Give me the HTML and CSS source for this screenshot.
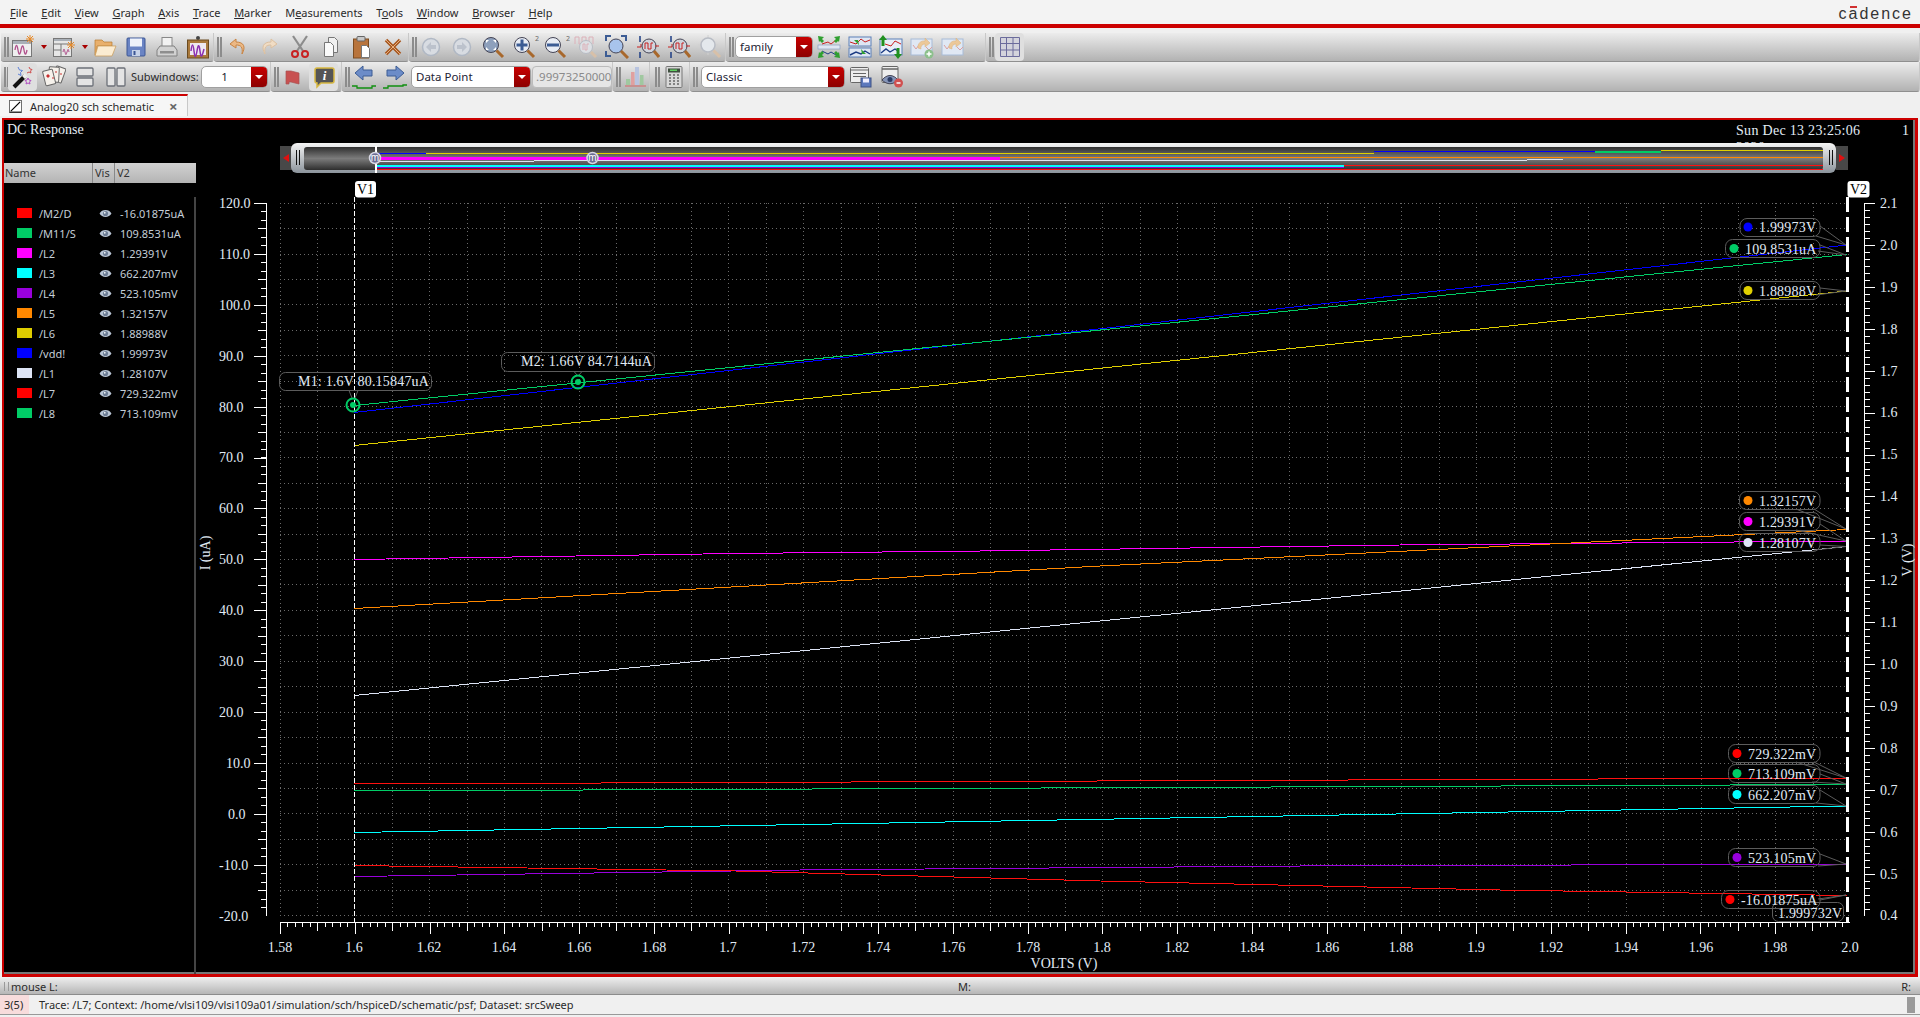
FILE: index.html
```html
<!DOCTYPE html>
<html lang="en">
<head>
<meta charset="utf-8">
<title>Virtuoso Visualization and Analysis</title>
<link rel="stylesheet" href="styles.css">
</head>
<body>
<svg class="defs" width="0" height="0">
  <defs>
    <linearGradient id="capsule" x1="0" y1="0" x2="0" y2="1"><stop offset="0" stop-color="#f4f4f4"/><stop offset="1" stop-color="#8c949c"/></linearGradient>
    <linearGradient id="inner" x1="0" y1="0" x2="0" y2="1"><stop offset="0" stop-color="#2e2e2e"/><stop offset=".5" stop-color="#7c7c7c"/><stop offset="1" stop-color="#2e2e2e"/></linearGradient>
    <symbol id="i-newwin" viewBox="0 0 24 24"><rect x="1.5" y="5.5" width="19" height="16" fill="#efefef" stroke="#777"/><rect x="2" y="6" width="18" height="3" fill="#a9b0b8"/><path d="M4 15c1-6 2-6 3 0s2 5 3 0 2-6 3 0 2 5 3 0" fill="none" stroke="#b0508c" stroke-width="1.3"/><path d="M19 0v8M15 4h8M16 1l6 6M22 1l-6 6" stroke="#e88a28"/></symbol>
    <symbol id="i-layout" viewBox="0 0 24 24"><rect x="1.5" y="3.5" width="18" height="18" fill="#e6e6e6" stroke="#777"/><path d="M1.500 9h18M9 9v12M1.500 15h7.500" stroke="#777" fill="none"/><rect x="2" y="4" width="17" height="2" fill="#a9b0b8"/><path d="M11 17c1-4 1-4 2 0s1 3 2 0 1-4 2 0" fill="none" stroke="#b0508c"/><path d="M19 6v8M15 10h8M16 7l6 6M22 7l-6 6" stroke="#e88a28"/></symbol>
    <symbol id="i-folder" viewBox="0 0 24 24"><path d="M2 5h7l2 2h8v4H4v9H2z" fill="#e9b06c" stroke="#b87c30" stroke-width=".7"/><path d="M5 11h18l-4 10H2z" fill="#fbecd2" stroke="#c89a54" stroke-width=".7"/></symbol>
    <symbol id="i-save" viewBox="0 0 24 24"><rect x="3" y="3" width="18" height="18" rx="1" fill="#6a84c4" stroke="#3c5694"/><rect x="6" y="3.500" width="12" height="8" fill="#eef2fa"/><rect x="8" y="15" width="8" height="6" fill="#c7d2e8"/><rect x="9.500" y="16" width="2" height="4" fill="#3c5694"/></symbol>
    <symbol id="i-print" viewBox="0 0 24 24"><rect x="7" y="2.500" width="10" height="9" fill="#f2f2f2" stroke="#888"/><path d="M5 11h14l3 4v6H2v-6z" fill="#d2d2d2" stroke="#808080"/><rect x="5" y="16" width="14" height="2.500" fill="#8e8e8e"/></symbol>
    <symbol id="i-frame" viewBox="0 0 24 24"><circle cx="12" cy="3" r="2" fill="#444"/><rect x="1.500" y="5" width="21" height="18" fill="#a9793c" stroke="#6a4a20"/><rect x="4" y="8" width="16" height="12" fill="#eee8f0"/><path d="M5 16c1-8 2-8 3 0s2 6 3 0 2-8 3 0 2 6 4-2" fill="none" stroke="#8c30b0" stroke-width="1.500"/></symbol>
    <symbol id="i-undo" viewBox="0 0 24 24"><path d="M10 4 4 9l6 4v-3c5 0 7 2 6 9 4-7 2-12-6-12z" fill="#ecb884" stroke="#c88444"/></symbol>
    <symbol id="i-redo" viewBox="0 0 24 24"><path d="M14 4l6 5-6 4v-3c-5 0-7 2-6 9-4-7-2-12 6-12z" fill="#f0dcc4" stroke="#dcc0a0"/></symbol>
    <symbol id="i-cut" viewBox="0 0 24 24"><path d="M5 1l10 15M19 1 9 16" stroke="#8c8c8c" stroke-width="2.200" fill="none"/><circle cx="7" cy="19" r="3" fill="none" stroke="#c82020" stroke-width="2"/><circle cx="17" cy="19" r="3" fill="none" stroke="#c82020" stroke-width="2"/></symbol>
    <symbol id="i-copy" viewBox="0 0 24 24"><path d="M9.500 2.500h6l3 3v12h-9z" fill="#f0f0f0" stroke="#777"/><path d="M5.500 7.500h6l3 3v11h-9z" fill="#fafafa" stroke="#777"/></symbol>
    <symbol id="i-paste" viewBox="0 0 24 24"><rect x="3.500" y="4" width="15" height="19" fill="#b8743c" stroke="#7c4c20"/><rect x="7" y="1.500" width="8" height="4.500" rx="1" fill="#c8c8c8" stroke="#666"/><path d="M11.500 10.500h5l3 3v9h-8z" fill="#fff" stroke="#777"/></symbol>
    <symbol id="i-x" viewBox="0 0 24 24"><path d="M5 5l14 14M19 5 5 19" stroke="#a85820" stroke-width="3.500"/><path d="M5 5l14 14M19 5 5 19" stroke="#e8b080" stroke-width="1"/></symbol>
    <symbol id="i-back" viewBox="0 0 24 24"><circle cx="12" cy="12" r="8.500" fill="#d8dce2" stroke="#b0b8c4" stroke-width="1.500"/><path d="M12 7 7 12l5 5v-3h5v-4h-5z" fill="#bcc2cc"/></symbol>
    <symbol id="i-fwd" viewBox="0 0 24 24"><circle cx="12" cy="12" r="8.500" fill="#d8dce2" stroke="#b0b8c4" stroke-width="1.500"/><path d="M12 7l5 5-5 5v-3H7v-4h5z" fill="#bcc2cc"/></symbol>
    <symbol id="i-zfit" viewBox="0 0 24 24"><circle cx="10" cy="10" r="7.500" fill="#8ea0bc" stroke="#445"/><path d="M5 5h3L5 8zM15 5h-3l3 3zM5 15h3l-3-3zM15 15h-3l3-3z" fill="#fff"/><path d="M15.500 15.500 22 22" stroke="#a8682c" stroke-width="3"/></symbol>
    <symbol id="i-zin" viewBox="0 0 24 24"><circle cx="10" cy="10" r="7.500" fill="#e8ecf4" stroke="#445"/><path d="M4.500 10h11M10 4.500v11" stroke="#3c5c94" stroke-width="3"/><path d="M15.500 15.500 22 22" stroke="#a8682c" stroke-width="3"/></symbol>
    <symbol id="i-zout" viewBox="0 0 24 24"><circle cx="10" cy="10" r="7.500" fill="#e8ecf4" stroke="#445"/><path d="M4 10h12" stroke="#3c5c94" stroke-width="3"/><path d="M15.500 15.500 22 22" stroke="#a8682c" stroke-width="3"/></symbol>
    <symbol id="i-zwave" viewBox="0 0 24 24"><path d="M1 9V2h4v7h3V2h4v7h3V2h4v7" fill="none" stroke="#dcb0b8"/><circle cx="12" cy="12" r="6.500" fill="#dde0e4" stroke="#b8bcc4"/><path d="M9 15V9h2v6h2V9h2" fill="none" stroke="#dcb0b8"/><path d="M17 17l5 5" stroke="#d8c0a8" stroke-width="3"/></symbol>
    <symbol id="i-zbox" viewBox="0 0 24 24"><path d="M1 6V1h5M16 1h5v5M1 16v5h5" fill="none" stroke="#3c5c94" stroke-width="2"/><circle cx="11" cy="11" r="7" fill="#a8c4ec" stroke="#445"/><path d="M16 16l7 7" stroke="#a8682c" stroke-width="3"/></symbol>
    <symbol id="i-zx" viewBox="0 0 24 24"><path d="M4 1v6M4 17v6" stroke="#1c3c84" stroke-width="1.500"/><path d="M1 12h4v-3" fill="none" stroke="#c82020"/><circle cx="13" cy="11" r="7" fill="#d0d4dc" stroke="#445"/><path d="M9 14V8h3v6h3V8h2M19 11h4" fill="none" stroke="#c82020"/><path d="M18 16l5 6" stroke="#a8682c" stroke-width="3"/></symbol>
    <symbol id="i-zdis" viewBox="0 0 24 24"><path d="M10 0v20M0 10h20" stroke="#d0d0d0"/><circle cx="10" cy="10" r="7" fill="#e4e8ec" stroke="#b8bcc4" stroke-width="1.500"/><path d="M15.500 15.500 22 22" stroke="#d8c0a8" stroke-width="3"/></symbol>
    <symbol id="i-tr1" viewBox="0 0 24 24"><rect x="1" y="10" width="22" height="4" fill="#dfe6f2" stroke="#8ca0c4" stroke-width=".7"/><path d="M5 9l6-2 3 2 5-4" fill="none" stroke="#c82020"/><path d="M5 16l6 3 3-2 5 3" fill="none" stroke="#1c3c84"/><path d="M1 1l6 1-2 2 2 2-2 2-2-2-1 1zM23 1l-6 1 2 2-2 2 2 2 2-2 1 1zM1 23l6-1-2-2 2-2-2-2-2 2-1-1zM23 23l-6-1 2-2-2-2 2-2 2 2 1-1z" fill="#30a030"/></symbol>
    <symbol id="i-tr2" viewBox="0 0 24 24"><rect x="1" y="2" width="22" height="9" fill="#dfe6f2" stroke="#5c80b8"/><rect x="1" y="13" width="22" height="9" fill="#dfe6f2" stroke="#5c80b8"/><path d="M2 7l6 2 5-5 4 3 5-2" fill="none" stroke="#c82020"/><path d="M2 20l6-3 5 2 4-3 5 3" fill="none" stroke="#1c3c84" stroke-width="1.400"/><path d="M6 5l5 5-1-5zM18 19l-5-5 1 5z" fill="#30a030"/></symbol>
    <symbol id="i-tr3" viewBox="0 0 24 24"><rect x="1" y="4" width="22" height="16" fill="#e8eef8" stroke="#5c80b8"/><path d="M6 9l6 2 4-5 6 3" fill="none" stroke="#c82020"/><path d="M2 18l5-4 4 3 5-3 3 2" fill="none" stroke="#1c3c84" stroke-width="1.400"/><path d="M4 0l4 5H5.500v6h-3V5H0zM19 24l-4-5h2.500v-6h3v6H23z" fill="#209020"/></symbol>
    <symbol id="i-tr4" viewBox="0 0 24 24"><rect x="1" y="4" width="21" height="16" fill="#e0e8f4" stroke="#a8bcd8"/><path d="M3 10l3 4 3-4M16 12l3 3 3-3" fill="none" stroke="#dca0a0"/><path d="M8 13a6 6 0 0 1 7-7V3l5 5-5 4V9a4 4 0 0 0-4 5z" fill="#ecc898" stroke="#d8b07c" stroke-width=".5"/><circle cx="19" cy="19" r="4.500" fill="#8cc08c"/><path d="M16.500 19h5M19 16.500v5" stroke="#fff" stroke-width="1.500"/></symbol>
    <symbol id="i-tr5" viewBox="0 0 24 24"><rect x="1" y="4" width="21" height="16" fill="#e0e8f4" stroke="#a8bcd8"/><path d="M3 10l3 4 3-4M16 12l3 3 3-3" fill="none" stroke="#dca0a0"/><path d="M8 13a6 6 0 0 1 7-7V3l5 5-5 4V9a4 4 0 0 0-4 5z" fill="#ecc898" stroke="#d8b07c" stroke-width=".5"/></symbol>
    <symbol id="i-grid" viewBox="0 0 24 24"><path d="M2.500 2.500h19v19h-19zM2.500 8.500h19M2.500 15h19M8.500 2.500v19M15 2.500v19" fill="#d4d4dc" stroke="#6c6c9c"/></symbol>
    <symbol id="i-wand" viewBox="0 0 24 24"><path d="M3 22 14 11" stroke="#111" stroke-width="4"/><path d="M12.500 12.500 15 10" stroke="#eee" stroke-width="4"/><path d="M7 2l1.500 3 3 .5-2 2 .5 3-3-1.500" fill="none" stroke="#5c80d8"/><path d="M18 2l1 2 2 .5-1.500 1.500.5 2-2-1-2 1" fill="none" stroke="#d05050"/><path d="M17 13l1 2 2 .5-1.500 1.500.5 2-2-1-2 1 .5-2-1.500-1.500 2-.5z" fill="none" stroke="#b050c0"/></symbol>
    <symbol id="i-cards" viewBox="0 0 24 24"><g stroke="#666" fill="#f6f2ec"><rect x="12" y="2" width="10" height="15" rx="1" transform="rotate(20 17 9)"/><rect x="7" y="2" width="10" height="15" rx="1" transform="rotate(3 12 9)"/><rect x="2" y="5" width="10" height="15" rx="1" transform="rotate(-14 7 12)"/></g><path d="M6 9l2 2-2 2-2-2zM14 6l1 1-1 1-1-1zM11 12l1 1-1 1-1-1zM19 8l1 1-1 1-1-1z" fill="#c83030"/></symbol>
    <symbol id="i-rows" viewBox="0 0 24 24"><rect x="4" y="3" width="16" height="8" rx="1" fill="#e4e4e4" stroke="#6c7078" stroke-width="1.300"/><rect x="4" y="13" width="16" height="8" rx="1" fill="#e4e4e4" stroke="#6c7078" stroke-width="1.300"/></symbol>
    <symbol id="i-cols" viewBox="0 0 24 24"><rect x="3" y="3" width="8" height="18" rx="1" fill="#e4e4e4" stroke="#6c7078" stroke-width="1.300"/><rect x="13" y="3" width="8" height="18" rx="1" fill="#e4e4e4" stroke="#6c7078" stroke-width="1.300"/></symbol>
    <symbol id="i-flag" viewBox="0 0 24 24"><path d="M5 6h5l8 2v11l-8-2H8v2H5z" fill="#c85050" stroke="#a85050" stroke-width=".7"/></symbol>
    <symbol id="i-info" viewBox="0 0 24 24"><path d="M5 3h15a2 2 0 0 1 2 2v11a2 2 0 0 1-2 2H9l-4 4v-4H5a2 2 0 0 1-2-2V5a2 2 0 0 1 2-2z" fill="#555" stroke="#d8b840" stroke-width="1.500"/><text x="12.500" y="15" class="ico-i">i</text></symbol>
    <symbol id="i-left" viewBox="0 0 24 24"><path d="M11 1 3 8l8 7v-4h9V5h-9z" fill="#6c8cc8" stroke="#3c5c94"/><path d="M0 21h5v2h15v-2h4" fill="none" stroke="#109010" stroke-width="1.300"/></symbol>
    <symbol id="i-right" viewBox="0 0 24 24"><path d="M13 1l8 7-8 7v-4H4V5h9z" fill="#6c8cc8" stroke="#3c5c94"/><path d="M0 23h5v-2h15v-1h4" fill="none" stroke="#109010" stroke-width="1.300"/></symbol>
    <symbol id="i-bars" viewBox="0 0 24 24"><path d="M2 21h21" stroke="#c89090" stroke-width="2"/><rect x="3" y="14" width="4" height="6" fill="#a0c8a0"/><rect x="8" y="7" width="3.500" height="13" fill="#e0a0a0"/><rect x="12" y="2" width="4" height="18" fill="#b8c4e0"/><rect x="17" y="10" width="3.500" height="10" fill="#a0c8a0"/></symbol>
    <symbol id="i-calc" viewBox="0 0 24 24"><rect x="4" y="1.500" width="16" height="21" rx="1" fill="#d8d8d8" stroke="#777"/><rect x="6" y="3.500" width="12" height="4" fill="#405040"/><rect x="8" y="4.500" width="7" height="1.500" fill="#60d060"/><path d="M7 10h2M11 10h2M15 10h2M7 13h2M11 13h2M15 13h2M7 16h2M11 16h2M15 16h2M7 19h2M11 19h2M15 19h2" stroke="#666" stroke-width="1.500"/></symbol>
    <symbol id="i-wsave" viewBox="0 0 24 24"><rect x="1.500" y="2.500" width="18" height="15" rx="1" fill="#eee" stroke="#666"/><path d="M1.500 5h18M4 8.500h13M4 11.500h13" stroke="#666"/><rect x="12" y="13" width="10" height="9" fill="#5c78bc" stroke="#3c5084"/><rect x="14" y="13.500" width="6" height="4" fill="#eef"/></symbol>
    <symbol id="i-wview" viewBox="0 0 24 24"><rect x="2" y="1.500" width="16" height="16" rx="1" fill="#eee" stroke="#666"/><path d="M2 4h16" stroke="#666" stroke-width="1.500"/><path d="M2 15c5-6 11-6 16 0-5 5-11 5-16 0z" fill="#8494b8" stroke="#445"/><circle cx="10" cy="14.500" r="2.500" fill="#2c3c64"/><circle cx="18.500" cy="18" r="4.500" fill="#d05050"/><path d="M16.500 18h4" stroke="#fff" stroke-width="1.500"/></symbol>
    <symbol id="i-eye" viewBox="0 0 14 12"><path d="M0.500 6C3 1 11 1 13.500 6 11 11 3 11 0.500 6z" fill="#b8c4d4"/><circle cx="7" cy="6" r="2.800" fill="#6c7c94"/><circle cx="6.200" cy="5.200" r="1" fill="#e8eef4"/></symbol>
    <symbol id="i-plot" viewBox="0 0 14 14"><rect x=".5" y=".5" width="13" height="13" fill="#fff" stroke="#666"/><path d="M2 12 12 2" stroke="#000" stroke-width="1.300"/><path d="M1 13h12" stroke="#000"/></symbol>
  </defs>
</svg>

<header class="menubar">
  <nav class="menus">
    <span><u>F</u>ile</span><span><u>E</u>dit</span><span><u>V</u>iew</span><span><u>G</u>raph</span><span><u>A</u>xis</span><span><u>T</u>race</span><span><u>M</u>arker</span><span>M<u>e</u>asurements</span><span>T<u>o</u>ols</span><span><u>W</u>indow</span><span><u>B</u>rowser</span><span><u>H</u>elp</span>
  </nav>
  <div class="logo">c<span class="logo-a">a</span>dence</div>
</header>

<section class="toolbars">
  <div class="tbrow tbrow-1">
    <div class="tbg"><i class="grip tight"></i>
      <span class="btn"><svg class="ic"><use href="#i-newwin"/></svg></span><span class="drop"></span>
      <span class="btn"><svg class="ic"><use href="#i-layout"/></svg></span><span class="drop"></span>
      <span class="btn"><svg class="ic"><use href="#i-folder"/></svg></span>
      <span class="btn"><svg class="ic"><use href="#i-save"/></svg></span>
      <span class="btn"><svg class="ic"><use href="#i-print"/></svg></span>
      <span class="btn"><svg class="ic"><use href="#i-frame"/></svg></span>
    </div>
    <div class="tbg"><i class="grip"></i>
      <span class="btn"><svg class="ic"><use href="#i-undo"/></svg></span>
      <span class="btn"><svg class="ic"><use href="#i-redo"/></svg></span>
      <span class="btn"><svg class="ic"><use href="#i-cut"/></svg></span>
      <span class="btn"><svg class="ic"><use href="#i-copy"/></svg></span>
      <span class="btn"><svg class="ic"><use href="#i-paste"/></svg></span>
      <span class="btn"><svg class="ic"><use href="#i-x"/></svg></span>
    </div>
    <div class="tbg"><i class="grip tight"></i>
      <span class="btn"><svg class="ic"><use href="#i-back"/></svg></span>
      <span class="btn"><svg class="ic"><use href="#i-fwd"/></svg></span>
      <span class="btn"><svg class="ic"><use href="#i-zfit"/></svg></span>
      <span class="btn"><svg class="ic"><use href="#i-zin"/></svg><sup class="two">2</sup></span>
      <span class="btn"><svg class="ic"><use href="#i-zout"/></svg><sup class="two">2</sup></span>
      <span class="btn"><svg class="ic"><use href="#i-zwave"/></svg></span>
      <span class="btn"><svg class="ic"><use href="#i-zbox"/></svg></span>
      <span class="btn"><svg class="ic"><use href="#i-zx"/></svg></span>
      <span class="btn"><svg class="ic"><use href="#i-zx"/></svg></span>
      <span class="btn"><svg class="ic"><use href="#i-zdis"/></svg></span>
    </div>
    <div class="tbg tbg-family"><i class="grip"></i>
      <div class="combo w-family"><span class="combo-text">family</span><span class="combo-arrow"></span></div>
      <span class="btn"><svg class="ic"><use href="#i-tr1"/></svg></span>
      <span class="btn"><svg class="ic"><use href="#i-tr2"/></svg></span>
      <span class="btn"><svg class="ic"><use href="#i-tr3"/></svg></span>
      <span class="btn"><svg class="ic"><use href="#i-tr4"/></svg></span>
      <span class="btn"><svg class="ic"><use href="#i-tr5"/></svg></span>
    </div>
    <div class="tbg tbg-fill"><i class="grip"></i>
      <span class="btn btn-on"><svg class="ic"><use href="#i-grid"/></svg></span>
    </div>
  </div>
  <div class="tbrow tbrow-2">
    <div class="tbg"><i class="grip tight"></i>
      <span class="btn btn-on"><svg class="ic"><use href="#i-wand"/></svg></span>
      <span class="btn"><svg class="ic"><use href="#i-cards"/></svg></span>
      <span class="btn"><svg class="ic"><use href="#i-rows"/></svg></span>
      <span class="btn"><svg class="ic"><use href="#i-cols"/></svg></span>
      <span class="tb-label">Subwindows:</span>
      <div class="combo w-sub"><span class="combo-text center">1</span><span class="combo-arrow"></span></div>
    </div>
    <div class="tbg pad-r2"><i class="grip tight"></i>
      <span class="btn"><svg class="ic"><use href="#i-flag"/></svg></span>
      <span class="btn btn-on"><svg class="ic"><use href="#i-info"/></svg></span>
    </div>
    <div class="tbg"><i class="grip tight"></i>
      <span class="btn"><svg class="ic"><use href="#i-left"/></svg></span>
      <span class="btn"><svg class="ic"><use href="#i-right"/></svg></span>
      <div class="combo w-point"><span class="combo-text">Data Point</span><span class="combo-arrow"></span></div>
      <div class="readonly">.99973250000</div>
    </div>
    <div class="tbg"><i class="grip"></i>
      <span class="btn narrow"><svg class="ic"><use href="#i-bars"/></svg></span>
    </div>
    <div class="tbg pad-l5"><i class="grip tight"></i>
      <span class="btn"><svg class="ic"><use href="#i-calc"/></svg></span>
    </div>
    <div class="tbg tbg-fill"><i class="grip"></i>
      <div class="combo w-classic"><span class="combo-text">Classic</span><span class="combo-arrow"></span></div>
      <span class="btn"><svg class="ic"><use href="#i-wsave"/></svg></span>
      <span class="btn"><svg class="ic"><use href="#i-wview"/></svg></span>
    </div>
  </div>
</section>

<div class="tabbar">
  <div class="tab"><svg class="tab-ic"><use href="#i-plot"/></svg><span>Analog20 sch schematic</span><b class="tab-x">×</b></div>
</div>

<main class="frame">
  <aside class="legend">
    <div class="legend-title">DC Response</div>
    <div class="legend-head"><span>Name</span><span>Vis</span><span>V2</span></div>
    <ul class="tree">
      <li><i class="sw c-red"></i><span class="nm">/M2/D</span><svg class="eye"><use href="#i-eye"/></svg><span>-16.01875uA</span></li>
      <li><i class="sw c-green"></i><span class="nm">/M11/S</span><svg class="eye"><use href="#i-eye"/></svg><span>109.8531uA</span></li>
      <li><i class="sw c-mag"></i><span class="nm">/L2</span><svg class="eye"><use href="#i-eye"/></svg><span>1.29391V</span></li>
      <li><i class="sw c-cyan"></i><span class="nm">/L3</span><svg class="eye"><use href="#i-eye"/></svg><span>662.207mV</span></li>
      <li><i class="sw c-pur"></i><span class="nm">/L4</span><svg class="eye"><use href="#i-eye"/></svg><span>523.105mV</span></li>
      <li><i class="sw c-org"></i><span class="nm">/L5</span><svg class="eye"><use href="#i-eye"/></svg><span>1.32157V</span></li>
      <li><i class="sw c-yel"></i><span class="nm">/L6</span><svg class="eye"><use href="#i-eye"/></svg><span>1.88988V</span></li>
      <li><i class="sw c-blue"></i><span class="nm">/vdd!</span><svg class="eye"><use href="#i-eye"/></svg><span>1.99973V</span></li>
      <li><i class="sw c-wht"></i><span class="nm">/L1</span><svg class="eye"><use href="#i-eye"/></svg><span>1.28107V</span></li>
      <li><i class="sw c-red"></i><span class="nm">/L7</span><svg class="eye"><use href="#i-eye"/></svg><span>729.322mV</span></li>
      <li><i class="sw c-green"></i><span class="nm">/L8</span><svg class="eye"><use href="#i-eye"/></svg><span>713.109mV</span></li>
    </ul>
  </aside>
  <svg class="plot" width="1719" height="854" viewBox="196 120 1719 854">
    <text class="t wide" x="1736" y="135">Sun Dec 13 23:25:06</text>
    <text class="t wide" x="1736" y="152">2020</text>
    <text class="t" x="1902" y="135">1</text>

    <!-- overview strip -->
    <rect x="280" y="146" width="12" height="24" fill="#484848"/>
    <path d="M283 158l6-4v8z" fill="#e01010"/>
    <rect x="1836" y="146" width="12" height="24" fill="#484848"/>
    <path d="M1845 158l-6-4v8z" fill="#e01010"/>
    <rect x="291" y="143" width="1545" height="30" rx="6" fill="url(#capsule)"/>
    <rect x="304" y="147" width="1519" height="23" rx="3" fill="url(#inner)"/>
    <path d="M296.500 150v15M299.500 150v15M1829.500 150v15M1832.500 150v15" stroke="#111"/>
    <g class="crisp" fill="none">
      <path d="M375 153.500h51M1374 151.500h221" stroke="#0000ff"/>
      <path d="M426 153.500h948M1661 150.500h162" stroke="#e0d000"/>
      <path d="M1595 151.500h66" stroke="#00cc66" stroke-width="2"/>
      <path d="M375 158h625" stroke="#ff00ff" stroke-width="3"/>
      <path d="M1000 157.500h823" stroke="#ff8800"/>
      <path d="M375 161.500h159M534 160.500h993M1527 159.500h36" stroke="#dde4f0"/>
      <path d="M375 166h969" stroke="#00ffff" stroke-width="2"/>
      <path d="M1344 165.500h479" stroke="#ff1010"/>
      <path d="M375 167.500h969" stroke="#9900dd"/>
      <path d="M375 169.500h1448" stroke="#ff1010"/>
      <path d="M375.500 146v27" stroke="#fff" stroke-width="2"/>
    </g>
    <g class="m-dot"><circle cx="375" cy="158" r="5.500"/><text x="375" y="161">m</text></g>
    <g class="m-dot"><circle cx="592.500" cy="158" r="5.500"/><text x="592.500" y="161">m</text></g>

    <!-- grid -->
    <path class="grid" d="M280 203.500H1849M280 228.500H1849M280 254.500H1849M280 279.500H1849M280 304.500H1849M280 330.500H1849M280 355.500H1849M280 381.500H1849M280 406.500H1849M280 432.500H1849M280 457.500H1849M280 483.500H1849M280 508.500H1849M280 534.500H1849M280 559.500H1849M280 584.500H1849M280 610.500H1849M280 635.500H1849M280 661.500H1849M280 686.500H1849M280 712.500H1849M280 737.500H1849M280 763.500H1849M280 788.500H1849M280 813.500H1849M280 839.500H1849M280 864.500H1849M280 890.500H1849M280 915.500H1849"/>
    <path class="grid" d="M280.500 203V916M317.500 203V916M392.500 203V916M429.500 203V916M467.500 203V916M504.500 203V916M541.500 203V916M579.500 203V916M616.500 203V916M654.500 203V916M691.500 203V916M728.500 203V916M766.500 203V916M803.500 203V916M841.500 203V916M878.500 203V916M915.500 203V916M953.500 203V916M990.500 203V916M1028.500 203V916M1065.500 203V916M1102.500 203V916M1140.500 203V916M1177.500 203V916M1214.500 203V916M1252.500 203V916M1289.500 203V916M1327.500 203V916M1364.500 203V916M1401.500 203V916M1439.500 203V916M1476.500 203V916M1514.500 203V916M1551.500 203V916M1588.500 203V916M1626.500 203V916M1663.500 203V916M1701.500 203V916M1738.500 203V916M1775.500 203V916M1813.500 203V916"/>

    <!-- axes -->
    <g class="crisp" stroke="#fff" fill="none">
      <path d="M266 203V916"/>
      <path d="M263.500 203V916" stroke-width="5" stroke-dasharray="1 7.483"/>
      <path d="M262 203V916" stroke-width="8" stroke-dasharray="1 24.450"/>
      <path d="M260 203V916" stroke-width="12" stroke-dasharray="1 49.900"/>
      <path d="M1864 203V916"/>
      <path d="M1867 203V916" stroke-width="6" stroke-dasharray="1 5.987"/>
      <path d="M1869.500 203V916" stroke-width="11" stroke-dasharray="1 40.920"/>
      <path d="M280 922H1850"/>
      <path d="M280 924.500H1850" stroke-width="5" stroke-dasharray="1 6.475"/>
      <path d="M280 926.500H1850" stroke-width="9" stroke-dasharray="1 36.375"/>
      <path d="M280 928H1850" stroke-width="12" stroke-dasharray="1 73.750"/>
    </g>
    <g class="t">
      <text x="219" y="208">120.0</text><text x="219" y="259">110.0</text><text x="219" y="310">100.0</text><text x="219" y="361">90.0</text><text x="219" y="412">80.0</text><text x="219" y="462">70.0</text><text x="219" y="513">60.0</text><text x="219" y="564">50.0</text><text x="219" y="615">40.0</text><text x="219" y="666">30.0</text><text x="219" y="717">20.0</text><text x="226" y="768">10.0</text><text x="228" y="819">0.0</text><text x="219" y="870">-10.0</text><text x="219" y="921">-20.0</text>
      <text x="1880" y="208">2.1</text><text x="1880" y="250">2.0</text><text x="1880" y="292">1.9</text><text x="1880" y="334">1.8</text><text x="1880" y="376">1.7</text><text x="1880" y="417">1.6</text><text x="1880" y="459">1.5</text><text x="1880" y="501">1.4</text><text x="1880" y="543">1.3</text><text x="1880" y="585">1.2</text><text x="1880" y="627">1.1</text><text x="1880" y="669">1.0</text><text x="1880" y="711">0.9</text><text x="1880" y="753">0.8</text><text x="1880" y="795">0.7</text><text x="1880" y="837">0.6</text><text x="1880" y="879">0.5</text><text x="1880" y="920">0.4</text>
    </g>
    <g class="t mid">
      <text x="280" y="952">1.58</text><text x="354" y="952">1.6</text><text x="429" y="952">1.62</text><text x="504" y="952">1.64</text><text x="579" y="952">1.66</text><text x="654" y="952">1.68</text><text x="728" y="952">1.7</text><text x="803" y="952">1.72</text><text x="878" y="952">1.74</text><text x="953" y="952">1.76</text><text x="1028" y="952">1.78</text><text x="1102" y="952">1.8</text><text x="1177" y="952">1.82</text><text x="1252" y="952">1.84</text><text x="1327" y="952">1.86</text><text x="1401" y="952">1.88</text><text x="1476" y="952">1.9</text><text x="1551" y="952">1.92</text><text x="1626" y="952">1.94</text><text x="1701" y="952">1.96</text><text x="1775" y="952">1.98</text><text x="1850" y="952">2.0</text>
      <text x="1064" y="968">VOLTS (V)</text>
      <text transform="translate(210 553) rotate(-90)">I (uA)</text>
      <text transform="translate(1912 560) rotate(-90)">V (V)</text>
    </g>

    <!-- traces -->
    <g class="crisp" fill="none">
      <path d="M354 412.500 1847 245" stroke="#0000ff"/>
      <path d="M354 405.500 1847 254.500" stroke="#00cc66"/>
      <path d="M354 445.500 1847 291" stroke="#e0d000"/>
      <path d="M354 559.500 735 553.500 980 551 1400 545 1847 541" stroke="#ff00ff"/>
      <path d="M354 608.500 1100 566 1847 529.500" stroke="#ff8800"/>
      <path d="M354 695.500 1847 546.500" stroke="#dde4f5"/>
      <path d="M354 784 1847 778" stroke="#ff1010"/>
      <path d="M354 791 1847 784.500" stroke="#00cc66"/>
      <path d="M354 832.500 1847 806" stroke="#00ffff"/>
      <path d="M354 876.500 800 870 1300 866 1847 864" stroke="#9900dd"/>
      <path d="M354 865.500 735 871 1100 881 1500 890 1847 895.500" stroke="#ff1010"/>
    </g>

    <!-- cursors -->
    <path class="crisp" d="M354.500 197V922" stroke="#fff" stroke-width="1" stroke-dasharray="5 2" fill="none"/>
    <path class="crisp" d="M1847.500 197V922" stroke="#fff" stroke-width="3" stroke-dasharray="15 5" fill="none"/>
    <g class="vtag"><rect x="355" y="181" width="21" height="16.500" rx="3"/><text x="365.500" y="194">V1</text></g>
    <g class="vtag"><rect x="1847.500" y="181" width="22" height="16.500" rx="3"/><text x="1858.500" y="194">V2</text></g>

    <!-- markers -->
    <g class="bubble">
      <rect x="279.500" y="372.500" width="152" height="18" rx="6"/>
      <path d="M349 390.500 352 398M358 390.500 355 398"/>
      <rect x="501.500" y="352.500" width="153" height="19" rx="6"/>
      <path d="M574 371.500 577 375M582 371.500 579 375"/>
    </g>
    <text class="t wide-s" x="298" y="386">M1: 1.6V 80.15847uA</text>
    <text class="t wide-s" x="521" y="366">M2: 1.66V 84.7144uA</text>
    <g class="mark"><circle cx="353" cy="405" r="6.500"/><circle class="core" cx="353" cy="405" r="3"/></g>
    <g class="mark"><circle cx="578" cy="382" r="6.500"/><circle class="core" cx="578" cy="382" r="3"/></g>

    <!-- end labels -->
    <g class="bubble">
      <rect x="1740" y="218.500" width="80" height="18" rx="7"/><path d="M1820 226 1846 245 1816 236"/>
      <rect x="1725.500" y="239.500" width="94.500" height="18" rx="7"/><path d="M1820 245 1846 255 1818 251"/>
      <rect x="1740" y="281.500" width="80" height="18" rx="7"/><path d="M1820 288 1846 291 1816 295"/>
      <rect x="1739.500" y="491.500" width="80.500" height="18" rx="7"/><path d="M1814 509 1846 529 1796 509"/>
      <rect x="1739.500" y="512.500" width="80.500" height="18" rx="7"/><path d="M1820 524 1846 541 1796 530"/>
      <rect x="1739.500" y="533.500" width="80.500" height="18" rx="7"/><path d="M1820 545 1846 546.500 1814 550"/>
      <rect x="1728.500" y="744.500" width="91.500" height="18" rx="7"/><path d="M1814 762 1846 778 1796 762"/>
      <rect x="1728.500" y="764.500" width="91.500" height="18" rx="7"/><path d="M1820 774 1846 784 1812 782"/>
      <rect x="1728.500" y="785.500" width="91.500" height="18" rx="7"/><path d="M1820 790 1846 806 1816 803"/>
      <rect x="1728.500" y="848.500" width="91.500" height="18" rx="7"/><path d="M1820 854 1846 864 1818 866"/>
      <rect x="1721.500" y="890.500" width="98.500" height="18" rx="7"/><path d="M1820 900 1846 895 1818 899"/>
      <rect x="1772.500" y="902.500" width="71" height="19" rx="6"/>
    </g>
    <circle cx="1748" cy="227" r="4.500" fill="#0000ff"/>
    <circle cx="1734" cy="248.500" r="4.500" fill="#00cc66"/>
    <circle cx="1748" cy="290.500" r="4.500" fill="#e0d000"/>
    <circle cx="1748" cy="500.500" r="4.500" fill="#ff8800"/>
    <circle cx="1748" cy="521.500" r="4.500" fill="#ff00ff"/>
    <circle cx="1748" cy="542.500" r="4.500" fill="#dde4f5"/>
    <circle cx="1737" cy="753.500" r="4.500" fill="#ff0000"/>
    <circle cx="1737" cy="773.500" r="4.500" fill="#00cc66"/>
    <circle cx="1737" cy="794.500" r="4.500" fill="#00ffff"/>
    <circle cx="1737" cy="857.500" r="4.500" fill="#9900dd"/>
    <circle cx="1730" cy="899.500" r="4.500" fill="#ff0000"/>
    <g class="t wide-s">
      <text x="1759" y="232">1.99973V</text>
      <text x="1745" y="254">109.8531uA</text>
      <text x="1759" y="296">1.88988V</text>
      <text x="1759" y="506">1.32157V</text>
      <text x="1759" y="527">1.29391V</text>
      <text x="1759" y="548">1.28107V</text>
      <text x="1748" y="759">729.322mV</text>
      <text x="1748" y="779">713.109mV</text>
      <text x="1748" y="800">662.207mV</text>
      <text x="1748" y="863">523.105mV</text>
      <text x="1741" y="905">-16.01875uA</text>
      <text x="1778" y="918">1.999732V</text>
    </g>
  </svg>
</main>

<footer class="status">
  <div class="mouse"><span class="mouse-l"><i class="mini-grip"></i>mouse L:</span><span>M:</span><span>R:</span></div>
  <div class="trace"><span class="count">3(5)</span><span class="trace-text">Trace: /L7; Context: /home/vlsi109/vlsi109a01/simulation/sch/hspiceD/schematic/psf; Dataset: srcSweep</span><i class="handle"></i></div>
</footer>
</body>
</html>
```

FILE: styles.css
```css
* { box-sizing: border-box; }
html, body { margin: 0; padding: 0; }
body {
  width: 1920px;
  height: 1017px;
  overflow: hidden;
  background: #f0f0f0;
  font-family: "Noto Sans", "Liberation Sans", sans-serif;
  font-size: 11px;
  color: #2a2a2a;
}
.defs { position: absolute; }

/* menu */
.menubar {
  height: 28px;
  border-bottom: 4px solid #cc0000;
  background: #f3f3f3;
  display: flex;
  align-items: center;
  justify-content: space-between;
  padding: 0 7px 0 10px;
}
.menus { display: flex; gap: 13.700px; }
.menus u { text-underline-offset: 1px; }
.logo {
  font-family: "Liberation Sans", sans-serif;
  font-size: 16px;
  letter-spacing: 2px;
  padding-top: 3px;
  color: #333;
  position: relative;
}
.logo-a { position: relative; }
.logo-a::before {
  content: "";
  position: absolute;
  left: 1px;
  top: 1px;
  width: 7px;
  height: 2px;
  background: #d03030;
}

/* toolbars */
.toolbars { padding-top: 5px; }
.tbrow { display: flex; padding-left: 1px; }
.tbrow-1 { height: 29px; }
.tbrow-2 { height: 30px; }
.tbg {
  display: flex;
  align-items: center;
  padding-left: 3px;
  border-radius: 0 0 3px 3px;
  border-bottom: 1px solid #8f8f8f;
  border-right: 1px solid #c8c8c8;
  background: linear-gradient(#ececec, #b2b2b2);
  flex: none;
}
.tbg-family { padding-right: 17px; }
.tbg-fill { flex: 1; }
.pad-r2 { padding-right: 2px; }
.pad-l5 { padding-left: 5px; }
.grip {
  width: 5px;
  height: 20px;
  flex: none;
  border-left: 2px solid #8c8c8c;
  border-right: 2px solid #8c8c8c;
}
.grip.tight { margin-right: -2px; }
.btn {
  width: 31px;
  height: 28px;
  flex: none;
  display: flex;
  align-items: center;
  justify-content: center;
  position: relative;
}
.btn.narrow { width: 28px; }
.btn-on { background: #dfdfdf; border-radius: 4px; width: 29px; margin: 0 1px; }
.ic { width: 24px; height: 24px; }
.ico-i { font: italic bold 13px "Liberation Serif", serif; fill: #fff; text-anchor: middle; }
.two { position: absolute; right: 0; top: 2px; font-size: 7px; line-height: 8px; margin: 0; color: #666; }
.drop { width: 10px; height: 28px; flex: none; position: relative; }
.drop::after {
  content: "";
  position: absolute;
  left: 3px;
  top: 12px;
  border-left: 3.500px solid transparent;
  border-right: 3.500px solid transparent;
  border-top: 4px solid #a80000;
}
.tb-label { width: 70px; flex: none; font-size: 11px; }
.combo {
  height: 22px;
  flex: none;
  display: flex;
  background: #fff;
  border: 1px solid #a0a0a0;
  border-radius: 5px;
  overflow: hidden;
}
.combo-text { flex: 1; padding: 0 0 0 4px; line-height: 20px; font-size: 11.500px; color: #223; white-space: nowrap; }
.combo-text.center { text-align: center; padding-right: 8px; }
.combo-arrow {
  width: 16px;
  flex: none;
  background: linear-gradient(#c80000, #8c0000);
  position: relative;
}
.combo-arrow::after {
  content: "";
  position: absolute;
  left: 4px;
  top: 8px;
  border-left: 4px solid transparent;
  border-right: 4px solid transparent;
  border-top: 4px solid #fff;
}
.w-family { width: 78px; margin-left: 1px; }
.w-sub { width: 67px; margin-right: 2px; }
.w-point { width: 120px; margin-left: 1px; }
.w-classic { width: 144px; margin-left: 3px; }
.readonly {
  width: 80px;
  height: 22px;
  flex: none;
  margin-left: 1px;
  border: 1px solid #bbb;
  border-radius: 4px;
  background: #e6e6e6;
  color: #8a8a8a;
  font-size: 11.500px;
  line-height: 20px;
  padding-left: 3px;
  overflow: hidden;
  white-space: nowrap;
}

/* tab */
.tabbar { height: 24px; padding-top: 2px; }
.tab {
  width: 188px;
  height: 22px;
  border-top: 2px solid #cc0000;
  border-right: 1px solid #c8c8c8;
  background: #f6f6f6;
  display: flex;
  align-items: center;
  padding-left: 9px;
  font-size: 11px;
}
.tab-ic { width: 13px; height: 13px; flex: none; margin-right: 8px; }
.tab-x { margin-left: 15px; font-size: 15px; font-weight: bold; color: #666; line-height: 12px; }

/* plot frame */
.frame {
  margin: 2px 2px 0;
  height: 859px;
  border: solid #cc0000;
  border-width: 2px 3px 3px 2px;
  background: #000;
  box-shadow: inset -2px -2px 0 #777;
  display: flex;
}
.legend { width: 192px; flex: none; display: flex; flex-direction: column; }
.legend-title {
  height: 43px;
  padding: 1px 0 0 3px;
  font: 14px/18px "Liberation Serif", serif;
  color: #e4ebf3;
}
.legend-head {
  height: 20px;
  flex: none;
  display: grid;
  grid-template-columns: 89px 22px 1fr;
  background: linear-gradient(#d2d2d2, #b4b4b4);
  font-size: 11px;
  line-height: 20px;
  color: #333;
}
.legend-head span { border-right: 1px solid #888; padding-left: 1px; }
.legend-head span + span { padding-left: 2px; }
.legend-head span:last-child { border-right: 0; }
.tree {
  list-style: none;
  flex: 1;
  margin: 14px 0 0;
  padding: 6px 0 0;
  border-right: 2px solid #444;
  color: #c4ced8;
  font-size: 11px;
  position: relative;
}
.tree li {
  height: 20px;
  display: flex;
  align-items: center;
  padding-left: 13px;
  white-space: nowrap;
}
.sw { width: 15px; height: 10px; flex: none; margin-right: 7px; }
.nm { width: 60px; flex: none; }
.eye { width: 13px; height: 11px; flex: none; margin-right: 8px; }
.c-red { background: #ff0000; }
.c-green { background: #00cc66; }
.c-mag { background: #ff00ff; }
.c-cyan { background: #00ffff; }
.c-pur { background: #9900dd; }
.c-org { background: #ff8800; }
.c-yel { background: #ddcc00; }
.c-blue { background: #0000ff; }
.c-wht { background: #dde4f5; }

.plot { flex: none; display: block; }
.t, .t text { font: 14px "Liberation Serif", serif; fill: #e2ecf6; }
.wide { letter-spacing: .3px; }
.wide-s, .wide-s text { letter-spacing: .2px; }
.mid text { text-anchor: middle; }
.grid { stroke: #6a6a6a; stroke-width: 1; stroke-dasharray: 1 3; fill: none; shape-rendering: crispEdges; }
.crisp { shape-rendering: crispEdges; }
.m-dot circle { fill: #6c6c94; stroke: #d8d8e4; stroke-width: 1.500; }
.m-dot text { font: 10px "Liberation Sans", sans-serif; fill: #fff; text-anchor: middle; }
.vtag rect { fill: #fff; }
.vtag text { font: 14px "Liberation Serif", serif; fill: #000; text-anchor: middle; }
.bubble rect, .bubble path { fill: none; stroke: #5c5c5c; stroke-width: 1; }
.mark circle { fill: none; stroke: #00cc66; stroke-width: 2; }
.mark .core { fill: #00cc66; stroke: none; }

/* status */
.status { margin-top: 1px; }
.mouse {
  height: 17px;
  display: grid;
  grid-template-columns: 958px 1fr auto;
  align-items: center;
  padding-right: 9px;
  background: linear-gradient(#ececec, #b6b6b6);
  border-bottom: 1px solid #8c8c8c;
  font-size: 11px;
}
.mouse-l { display: flex; align-items: center; padding-left: 4px; }
.mini-grip {
  width: 5px;
  height: 9px;
  margin-right: 2px;
  border-left: 1px solid #999;
  border-right: 1px solid #999;
}
.trace {
  height: 20px;
  display: flex;
  align-items: center;
  border-bottom: 1px solid #999;
  position: relative;
  font-size: 11px;
}
.count { width: 29px; height: 100%; background: #f8dcdc; line-height: 19px; padding-left: 4px; flex: none; }
.trace-text { padding-left: 10px; flex: 1; white-space: nowrap; }
.handle { width: 8px; height: 16px; background: #9a9a9a; margin-right: 5px; flex: none; }
```
